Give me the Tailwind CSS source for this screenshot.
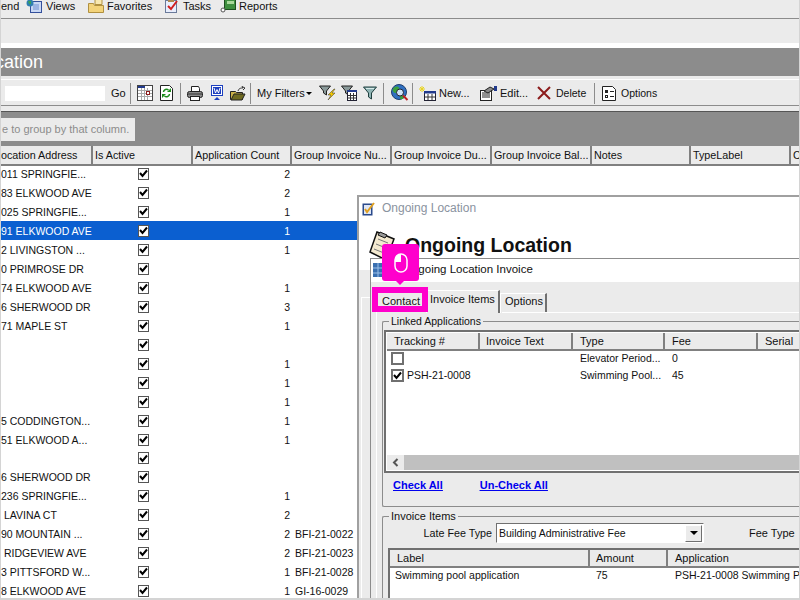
<!DOCTYPE html>
<html lang="en">
<head>
  <meta charset="UTF-8" />
  <title>Ongoing Location</title>
  <script src="https://cdn.jsdelivr.net/npm/@tailwindcss/browser@4"></script>
</head>
<body class="m-0 bg-white">
<div class="relative w-[800px] h-[600px] overflow-hidden bg-[#ebebeb] font-['Liberation_Sans',sans-serif] text-[11px] leading-[13px] text-[#111]">

  <!-- menu bar -->
  <div class="flex items-center h-[19px] bg-[#ebebeb] border-b border-[#8c8c8c] pb-[6px]">
    <span class="w-[26px] pl-px">end</span>
    <span class="flex items-center gap-[4px] w-[62px]">
      <svg width="16" height="14" viewBox="0 0 16 14"><rect x="4.500" y="2.500" width="11" height="11" fill="#c9d8f4" stroke="#34509c"/><path d="M7 6h6M7 8h6M7 10h6" stroke="#6f8fd0"/><circle cx="4" cy="4" r="3.500" fill="#2f7fb0"/><path d="M2 2h3v3H3z" fill="#3aa05a"/></svg><span>Views</span>
    </span>
    <span class="flex items-center gap-[3px] w-[76px]">
      <svg width="16" height="14" viewBox="0 0 16 14"><path d="M7 0.500h7v5H7z" fill="#f8e8b0" stroke="#b09040"/><path d="M0.500 4.500h5l1 2h9v7h-15z" fill="#f3d37a" stroke="#b09040"/></svg><span>Favorites</span>
    </span>
    <span class="flex items-center gap-[3px] w-[56px]">
      <svg width="16" height="14" viewBox="0 0 16 14"><rect x="1.500" y="1.500" width="11" height="12" fill="#e8eefc" stroke="#6a7a9a"/><rect x="4" y="0" width="6" height="3" fill="#b08a50"/><path d="M4 7l3 3 6-8" fill="none" stroke="#d02020" stroke-width="2"/></svg><span>Tasks</span>
    </span>
    <span class="flex items-center gap-[3px]">
      <svg width="16" height="14" viewBox="0 0 16 14"><rect x="4.500" y="0.500" width="11" height="10" fill="#3f8f3f" stroke="#1d4f1d"/><rect x="7" y="2" width="7" height="3" fill="#a9d89a"/><circle cx="3" cy="11" r="2" fill="#fff" stroke="#555"/></svg><span>Reports</span>
    </span>
  </div>

  <div class="h-[24px] bg-[#ebebeb]"></div>
  <div class="h-[5px] bg-white"></div>

  <!-- title band -->
  <div class="h-[28px] ml-px bg-[#8c8c8c] text-white text-[18px] leading-[28px] overflow-hidden">
    <span class="block -ml-[6px]">cation</span>
  </div>

  <!-- toolbar -->
  <div class="h-[4px] ml-px bg-[#ebebeb] border-b border-white"></div>
  <div class="flex items-center h-[26px] ml-px pt-px bg-[#ebebeb] border-b border-[#8c8c8c]">
    <div class="w-[100px] h-[15px] ml-[4px] bg-white"></div>
    <span class="ml-[6px] w-[19px]">Go</span>
    <div class="w-px h-[21px] bg-[#8c8c8c]"></div>
    <svg class="ml-[6px]" width="16" height="16" viewBox="0 0 16 16"><rect x="0.500" y="0.500" width="15" height="15" fill="#fff" stroke="#444"/><rect x="1" y="1" width="7" height="2" fill="#223a8c"/><path d="M1 5.500h14M1 8.500h14M1 11.500h14M4.500 3v12M7.500 3v12M10.500 3v12" stroke="#aaa"/><rect x="9.500" y="6.500" width="3" height="3" fill="#fff" stroke="#8c1c1c"/></svg>
    <svg class="ml-[7px]" width="13" height="16" viewBox="0 0 13 16"><path d="M0.500 0.500h9l3 3v12h-12z" fill="#fff" stroke="#222"/><path d="M3.500 7a3 3 0 0 1 5-2M9.500 9a3 3 0 0 1-5 2" fill="none" stroke="#1c8c1c" stroke-width="1.500"/><path d="M7 7h4V3zM6 9H2v4z" fill="#1c8c1c"/></svg>
    <div class="w-px h-[21px] ml-[7px] bg-[#8c8c8c]"></div>
    <svg class="ml-[6px]" width="16" height="15" viewBox="0 0 16 15"><path d="M4.500 0.500h7l1 2v3h-8z" fill="#fff" stroke="#222"/><rect x="0.500" y="5.500" width="15" height="6" rx="2" fill="#8a8a8a" stroke="#222"/><path d="M1 8h14" stroke="#333"/><rect x="3.500" y="10.500" width="9" height="4" fill="#fff" stroke="#222"/></svg>
    <svg class="ml-[8px]" width="12" height="16" viewBox="0 0 12 16"><rect x="0.500" y="0.500" width="11" height="10" fill="#fff" stroke="#1c3fbf"/><rect x="2" y="2" width="8" height="7" fill="#1c3fbf"/><path d="M3 3l1.500 5L6 4.500 7.500 8 9 3" fill="none" stroke="#fff"/><path d="M6 12l3 3H3z" fill="#1c3fbf"/></svg>
    <svg class="ml-[7px]" width="16" height="15" viewBox="0 0 16 15"><path d="M0.500 5.500h5l1 1h6v7h-12z" fill="#c8b048" stroke="#222"/><path d="M1 14l3-6h11l-3 6z" fill="#6f6a20" stroke="#222"/><path d="M8 5c1-3 3-3 5-3l-1-1.500L15 2l-2 2" fill="none" stroke="#333"/></svg>
    <div class="w-px h-[21px] ml-[4px] bg-[#8c8c8c]"></div>
    <span class="ml-[6px] w-[49px]">My Filters</span>
    <span class="w-0 h-0 border-x-[3px] border-x-transparent border-t-[3px] border-t-black"></span>
    <svg class="ml-[7px]" width="17" height="16" viewBox="0 0 17 16"><path d="M0.500 1h11l-4 5v4l-3-2V6z" fill="#8a9a9a" stroke="#222"/><path d="M15 4l-6 6h3l-3 5 7-7h-3l3-4z" fill="#f3c800" stroke="#333" stroke-width="0.500"/></svg>
    <svg class="ml-[5px]" width="16" height="16" viewBox="0 0 16 16"><path d="M0.500 1h11l-4 5v4l-3-2V6z" fill="#8a9a9a" stroke="#222"/><rect x="6.500" y="5.500" width="9" height="10" fill="#fff" stroke="#223"/><rect x="6" y="5" width="10" height="2" fill="#223a8c"/><path d="M9.500 8v7M12.500 8v7M7 10.500h8M7 13h8" stroke="#333"/></svg>
    <svg class="ml-[6px]" width="14" height="14" viewBox="0 0 14 14"><path d="M0.500 1h13l-5 6v6l-3-2V7z" fill="#8fb4b4" stroke="#1d3d3d"/><path d="M3 2.500h8" stroke="#d8eaea"/></svg>
    <div class="w-px h-[21px] ml-[6px] bg-[#8c8c8c]"></div>
    <svg class="ml-[7px]" width="18" height="18" viewBox="0 0 18 18"><circle cx="8" cy="8" r="7.500" fill="#2f6fc0" stroke="#1d3d6c"/><path d="M2 5c2-3 5-3 6-1s-1 5-3 5-4-2-3-4zM9 12l4-1-1 4-3 0z" fill="#3aa03a"/><circle cx="9" cy="8.500" r="3.500" fill="#cfe3f7" stroke="#223"/><path d="M12 11.500l4.500 4.500" stroke="#c02020" stroke-width="2"/></svg>
    <div class="w-px h-[21px] ml-[3px] bg-[#8c8c8c]"></div>
    <svg class="ml-[6px]" width="17" height="15" viewBox="0 0 17 15"><rect x="5.500" y="5.500" width="11" height="9" fill="#fff" stroke="#223"/><rect x="5" y="5" width="12" height="2.500" fill="#223a8c"/><path d="M9 8v6M13 8v6M6 11h10" stroke="#333"/><path d="M3 0v6M0 3h6M1 1l4 4M5 1l-4 4" stroke="#e8d420"/></svg>
    <span class="ml-[3px] w-[30px]">New...</span>
    <svg class="ml-[11px]" width="17" height="15" viewBox="0 0 17 15"><rect x="0.500" y="4.500" width="11" height="10" fill="#fff" stroke="#222"/><path d="M2 7h8M2 9h8M2 11h8" stroke="#222"/><path d="M4 5l6-4 4 2-6 4z" fill="#8a8a8a" stroke="#222"/><rect x="14" y="0" width="3" height="5" fill="#223a8c"/></svg>
    <span class="ml-[3px] w-[26px]">Edit...</span>
    <svg class="ml-[11px]" width="14" height="14" viewBox="0 0 14 14"><path d="M1 1l12 12M13 1L1 13" stroke="#8c1c1c" stroke-width="2"/></svg>
    <span class="ml-[5px] w-[30px] text-[10.500px]">Delete</span>
    <div class="w-px h-[21px] ml-[8px] bg-[#8c8c8c]"></div>
    <svg class="ml-[7px]" width="14" height="15" viewBox="0 0 14 15"><path d="M0.500 0.500h10l3 3v11h-13z" fill="#fff" stroke="#222"/><rect x="3" y="4" width="3" height="3" fill="#222"/><rect x="3.500" y="9.500" width="2" height="2" fill="#fff" stroke="#222"/><path d="M8 5.500h4M8 10.500h4" stroke="#222"/></svg>
    <span class="ml-[5px] text-[10.500px]">Options</span>
  </div>

  <!-- group panel -->
  <div class="h-[6px] bg-[#ebebeb] ml-px border-b border-[#555]"></div>
  <div class="h-[34px] ml-px bg-[#8c8c8c] pt-[6px]">
    <div class="w-[134px] h-[23px] bg-[#ebebeb] text-[#8c8c8c] leading-[23px] whitespace-nowrap overflow-hidden"><span class="block pl-px">e to group by that column.</span></div>
  </div>

  <!-- grid header -->
  <div class="grid grid-cols-[92px_100px_99px_100px_100px_100px_99px_100px_9px] h-[18px] ml-px text-[10.750px] leading-[18px]">
    <div class="bg-[#ebebeb] border-r-2 border-b-2 border-[#808080] whitespace-nowrap overflow-hidden">ocation Address</div>
    <div class="bg-[#ebebeb] border-r-2 border-b-2 border-[#808080] pl-[2px] whitespace-nowrap overflow-hidden">Is Active</div>
    <div class="bg-[#ebebeb] border-r-2 border-b-2 border-[#808080] pl-[2px] whitespace-nowrap overflow-hidden">Application Count</div>
    <div class="bg-[#ebebeb] border-r-2 border-b-2 border-[#808080] pl-[2px] whitespace-nowrap overflow-hidden">Group Invoice Nu...</div>
    <div class="bg-[#ebebeb] border-r-2 border-b-2 border-[#808080] pl-[2px] whitespace-nowrap overflow-hidden">Group Invoice Du...</div>
    <div class="bg-[#ebebeb] border-r-2 border-b-2 border-[#808080] pl-[2px] whitespace-nowrap overflow-hidden">Group Invoice Bal...</div>
    <div class="bg-[#ebebeb] border-r-2 border-b-2 border-[#808080] pl-[2px] whitespace-nowrap overflow-hidden">Notes</div>
    <div class="bg-[#ebebeb] border-r-2 border-b-2 border-[#808080] pl-[2px] whitespace-nowrap overflow-hidden">TypeLabel</div>
    <div class="bg-[#ebebeb] border-b-2 border-[#808080] pl-[2px]">C</div>
  </div>

  <!-- grid rows, filled by script below -->
  <div id="rows" class="ml-px bg-white text-[10.500px]"></div>

  <!-- background dialog -->
  <div class="absolute left-[357px] top-[195px] w-[460px] h-[420px] bg-[#ebebeb] border-2 border-[#a0a0a0]">
    <div class="bg-white">
      <div class="flex items-center h-[22px] pl-[3px] gap-[6px] text-[#8a93a0] text-[12px]">
        <svg width="14" height="15" viewBox="0 0 14 15"><rect x="0.500" y="2.500" width="10" height="12" fill="#2a4a8c"/><rect x="2" y="4" width="7" height="9" fill="#dfe6f5"/><path d="M3 8l2 3 7-9" fill="none" stroke="#e0a020" stroke-width="2"/></svg>
        <span>Ongoing Location</span>
      </div>
      <div class="flex items-center h-[51px] pl-[10px] pt-[2px] gap-[10px]">
        <svg width="26" height="30" viewBox="0 0 26 30"><path d="M8 1l17 7-8 21L1 21z" fill="#f4ead0" stroke="#111" stroke-width="1.500"/><path d="M9 8l10 4M7 13l10 4M5 18l10 4" stroke="#777"/><path d="M11 1l7 3-2 3-7-3z" fill="#999" stroke="#111"/></svg>
        <span class="font-bold text-[19.500px]">Ongoing Location</span>
      </div>
    </div>
    <div class="absolute left-[2px] top-[100px] w-[11px] bottom-0 border-l border-t border-white"></div>
  </div>

  <!-- invoice dialog -->
  <div class="absolute left-[370px] top-[258px] w-[440px] h-[350px] bg-[#ebebeb] border-l border-t border-[#8c8c8c]">
    <div class="flex items-center h-[23px] pl-[2px] pb-[2px] bg-white text-[11.500px]">
      <svg width="18" height="16" viewBox="0 0 18 16"><rect x="0" y="1" width="17" height="14" fill="#3a6fb0"/><path d="M5 1v14M11 1v14M0 6h17M0 11h17" stroke="#9ac0e8"/></svg>
      <span class="ml-[12px]">Ongoing Location Invoice</span>
    </div>

    <!-- tabs -->
    <div class="flex items-start h-[31px] pl-[5px]">
      <div class="w-[50px] mt-[13px] text-center">Contact</div>
      <div class="w-[74px] h-[23px] mt-[8px] bg-[#ebebeb] border-t border-l border-r-2 border-white border-r-[#707070] pl-[3px] leading-[16px] whitespace-nowrap">Invoice Items</div>
      <div class="w-[47px] h-[20px] mt-[11px] border-t border-l border-r-2 border-white border-r-[#707070] pl-[4px] leading-[14px] whitespace-nowrap">Options</div>
    </div>
    <div class="absolute left-[131px] right-0 top-[53px] border-t border-white"></div>
    <div class="absolute left-[5px] top-[53px] bottom-0 border-l border-white"></div>

    <!-- linked applications -->
    <fieldset class="relative mt-[3px] ml-[11px] w-[440px] h-[191px] border border-[#8c8c8c] border-r-0 rounded-[2px] px-px">
      <legend class="ml-[5px] px-[2px] leading-[11px] text-[10.500px]">Linked Applications</legend>
      <div class="w-[440px] h-[143px] mt-[3px] bg-white border-2 border-[#707070] pt-px pl-px overflow-hidden">
        <div class="grid grid-cols-[93px_93px_92px_93px_60px] h-[17px] leading-[16px]">
          <div class="bg-[#ebebeb] border-r-2 border-b-2 border-[#808080] pl-[7px]">Tracking #</div>
          <div class="bg-[#ebebeb] border-r-2 border-b-2 border-[#808080] pl-[6px]">Invoice Text</div>
          <div class="bg-[#ebebeb] border-r-2 border-b-2 border-[#808080] pl-[7px]">Type</div>
          <div class="bg-[#ebebeb] border-r-2 border-b-2 border-[#808080] pl-[7px]">Fee</div>
          <div class="bg-[#ebebeb] border-b-2 border-[#808080] pl-[7px]">Serial</div>
        </div>
        <div class="grid grid-cols-[93px_93px_92px_93px_60px] h-[17px] items-center text-[10.500px]">
          <div class="pl-[4px]"><div class="w-[13px] h-[13px] border-2 border-[#707070] bg-white"></div></div>
          <div></div>
          <div class="pl-[7px] whitespace-nowrap">Elevator Period...</div>
          <div class="pl-[7px]">0</div>
          <div></div>
        </div>
        <div class="grid grid-cols-[93px_93px_92px_93px_60px] h-[17px] items-center text-[10.500px]">
          <div class="flex items-center gap-[3px] pl-[4px]">
            <div class="flex items-center justify-center w-[13px] h-[13px] border-2 border-[#707070] bg-white">
              <svg width="9" height="9" viewBox="0 0 9 9"><path d="M1 4l2.500 3L8 1.500" fill="none" stroke="#000" stroke-width="2"/></svg>
            </div>
            <span>PSH-21-0008</span>
          </div>
          <div></div>
          <div class="pl-[7px] whitespace-nowrap">Swimming Pool...</div>
          <div class="pl-[7px]">45</div>
          <div></div>
        </div>
        <div class="h-[71px]"></div>
        <div class="flex items-center h-[15px] bg-[#c0c0c0]">
          <div class="flex items-center justify-center w-[17px] h-full bg-[#ebebeb]">
            <svg width="7" height="9" viewBox="0 0 7 9"><path d="M5.500 1L2 4.500 5.500 8" fill="none" stroke="#555" stroke-width="2"/></svg>
          </div>
        </div>
      </div>
      <div class="flex gap-[37px] pl-[9px] pt-[6px] font-bold text-[#0000ee] underline">
        <a href="#">Check All</a>
        <a href="#">Un-Check All</a>
      </div>
    </fieldset>

    <!-- invoice items -->
    <fieldset class="relative mt-[4px] ml-[11px] w-[440px] h-[100px] border border-[#8c8c8c] border-r-0 rounded-[2px]">
      <legend class="ml-[6px] px-[2px] leading-[11px]">Invoice Items</legend>
      <div class="flex items-center h-[20px] mt-px">
        <span class="w-[109px] text-right whitespace-nowrap text-[10.750px]">Late Fee Type</span>
        <div class="flex items-center justify-between w-[208px] h-[20px] ml-[4px] bg-white border border-[#707070] border-b-white border-r-white pl-[2px] text-[10.500px]">
          <span>Building Administrative Fee</span>
          <div class="flex items-center justify-center w-[17px] h-[17px] bg-[#ebebeb] border border-[#707070] border-t-white border-l-white mr-px">
            <span class="w-0 h-0 border-x-[4px] border-x-transparent border-t-[4px] border-t-black"></span>
          </div>
        </div>
        <span class="ml-[45px] whitespace-nowrap">Fee Type</span>
      </div>
      <div class="ml-[5px] mt-[5px] w-[440px] h-[80px] bg-white border-l-2 border-t-2 border-[#707070]">
        <div class="grid grid-cols-[200px_78px_160px] h-[16px] leading-[16px]">
          <div class="bg-[#ebebeb] border-r-2 border-b-2 border-[#808080] pl-[7px]">Label</div>
          <div class="bg-[#ebebeb] border-r-2 border-b-2 border-[#808080] pl-[6px]">Amount</div>
          <div class="bg-[#ebebeb] border-b-2 border-[#808080] pl-[7px]">Application</div>
        </div>
        <div class="grid grid-cols-[200px_78px_160px] h-[17px] pt-[2px] items-center text-[10.500px]">
          <div class="pl-[5px]">Swimming pool application</div>
          <div class="pl-[6px]">75</div>
          <div class="pl-[7px] whitespace-nowrap">PSH-21-0008 Swimming P</div>
        </div>
      </div>
    </fieldset>
  </div>

  <!-- pink tutorial callout -->
  <div class="absolute left-[382px] top-[244px] flex items-center justify-center w-[37px] h-[37px] rounded-[3px] bg-[#ff00cc]">
    <svg width="14" height="20" viewBox="0 0 14 20"><rect x="1" y="1" width="12" height="18" rx="6" fill="#ff00cc" stroke="#fff" stroke-width="1.500"/><path d="M7 1a6 6 0 0 0-6 6v2h6z" fill="#fff"/></svg>
    <span class="absolute left-[13px] top-[36px] w-0 h-0 border-x-[5px] border-x-transparent border-t-[5px] border-t-[#ff00cc]"></span>
  </div>
  <div class="absolute left-[372px] top-[287px] w-[56px] h-[25px] border-[6px] border-[#ff00cc]"></div>

  <!-- screenshot frame -->
  <div class="absolute inset-0 pointer-events-none border-l border-r border-b-2 border-[#d4d4d4]"></div>
</div>

<script>
  const data = [
    ["011 SPRINGFIE...", "2", ""], ["83 ELKWOOD AVE", "2", ""], ["025 SPRINGFIE...", "1", ""],
    ["91 ELKWOOD AVE", "1", ""], ["2 LIVINGSTON ...", "1", ""], ["0 PRIMROSE DR", "", ""],
    ["74 ELKWOOD AVE", "1", ""], ["6 SHERWOOD DR", "3", ""], ["71 MAPLE ST", "1", ""],
    ["", "", ""], ["", "1", ""], ["", "1", ""], ["", "1", ""],
    ["5 CODDINGTON...", "1", ""], ["51 ELKWOOD A...", "1", ""], ["", "", ""],
    ["6 SHERWOOD DR", "", ""], ["236 SPRINGFIE...", "1", ""], [" LAVINA CT", "2", ""],
    ["90 MOUNTAIN ...", "2", "BFI-21-0022"], [" RIDGEVIEW AVE", "2", "BFI-21-0023"],
    ["3 PITTSFORD W...", "1", "BFI-21-0028"], ["8 ELKWOOD AVE", "1", "GI-16-0029"],
  ];
  const check = '<div class="flex items-center justify-center w-[11px] h-[12px] border border-[#555] bg-white"><svg width="9" height="9" viewBox="0 0 9 9"><path d="M1 4l2.500 3L8 1.500" fill="none" stroke="#000" stroke-width="2"/></svg></div>';
  document.getElementById("rows").innerHTML = data.map((r, i) => {
    const rowClass = i === 3 ? "bg-[#0b5fd0] text-white" : "";
    const height = i === 15 ? "h-[18px]" : "h-[19px]";
    return `<div class="grid grid-cols-[92px_100px_99px_200px] ${height} items-center ${rowClass}">
      <div class="whitespace-pre pt-px">${r[0]}</div>
      <div class="flex justify-center">${check}</div>
      <div class="text-right pr-[2px] pt-px">${r[1]}</div>
      <div class="pl-[3px] pt-px">${r[2]}</div>
    </div>`;
  }).join("");
</script>
</body>
</html>
